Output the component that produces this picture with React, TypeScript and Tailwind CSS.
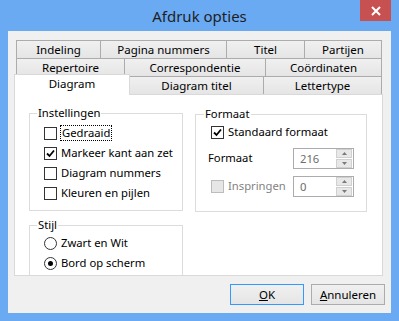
import React from "react";

const font = { fontFamily: '"Noto Sans", "Liberation Sans", sans-serif' };

function Tab({ label, w, first, h = "h-[19px]" }: { label: string; w: string; first?: boolean; h?: string }) {
  return (
    <div
      className={`${w} ${h} ${first ? "" : "-ml-px"} flex items-center justify-center border border-[#acacac] bg-gradient-to-b from-[#f0f0f0] to-[#e5e5e5] text-[11.5px] text-black leading-none`}
    >
      {label}
    </div>
  );
}

function Check({ checked, disabled }: { checked?: boolean; disabled?: boolean }) {
  return (
    <div
      className={`w-[13px] h-[13px] flex items-center justify-center border ${
        disabled ? "border-[#bcbcbc] bg-[#e6e6e6]" : "border-[#333333] bg-white"
      }`}
    >
      {checked && (
        <svg width="9" height="9" viewBox="0 0 9 9">
          <path d="M1 4.5 L3.5 7 L8 1.5" fill="none" stroke="#000" strokeWidth="1.8" />
        </svg>
      )}
    </div>
  );
}

function Radio({ checked }: { checked?: boolean }) {
  return (
    <div className="w-[13px] h-[13px] rounded-full border border-[#333333] bg-white flex items-center justify-center">
      {checked && <div className="w-[5px] h-[5px] rounded-full bg-black" />}
    </div>
  );
}

function Spin({ value }: { value: string }) {
  return (
    <div className="w-[61px] h-[21px] border border-[#acacac] bg-white flex items-center">
      <span className="flex-1 pl-[6px] text-[#6d6d6d] leading-none">{value}</span>
      <div className="flex flex-col w-[16px] h-[19px] mr-px gap-px">
        <div className="flex-1 border border-[#d0d0d0] bg-[#e8e8e8] flex items-center justify-center">
          <svg width="5" height="3" viewBox="0 0 5 3">
            <path d="M0 3 L2.5 0 L5 3 Z" fill="#7a7a7a" />
          </svg>
        </div>
        <div className="flex-1 border border-[#d0d0d0] bg-[#e8e8e8] flex items-center justify-center">
          <svg width="5" height="3" viewBox="0 0 5 3">
            <path d="M0 0 L2.5 3 L5 0 Z" fill="#7a7a7a" />
          </svg>
        </div>
      </div>
    </div>
  );
}

export default function App() {
  return (
    <div className="w-[399px] h-[321px] bg-[#6aaaf3] flex flex-col overflow-hidden" style={font}>
      {/* Title bar */}
      <div className="relative h-[31px] flex items-center justify-center">
        <span className="text-[15px] text-[#1e1e1e] leading-none mt-[1px]">Afdruk opties</span>
        <div className="absolute right-[8px] top-0 w-[31px] h-[21px] bg-[#c75050] flex items-center justify-center">
          <svg width="10" height="10" viewBox="0 0 10 10">
            <path d="M1 1 L9 9 M9 1 L1 9" stroke="#fff" strokeWidth="2" />
          </svg>
        </div>
      </div>

      {/* Client area */}
      <div className="mx-[8px] h-[282px] bg-[#f0f0f0] pt-[9px] pl-[6px] flex flex-col">
        {/* Tabs */}
        <div className="flex ml-[2px]">
          <Tab label="Indeling" w="w-[85px]" first />
          <Tab label="Pagina nummers" w="w-[127px]" />
          <Tab label="Titel" w="w-[79px]" />
          <Tab label="Partijen" w="w-[78px]" />
        </div>
        <div className="flex ml-[2px] -mt-px">
          <Tab label="Repertoire" w="w-[109px]" first />
          <Tab label="Correspondentie" w="w-[142px]" />
          <Tab label="Coördinaten" w="w-[117px]" />
        </div>
        <div className="flex items-end h-[20px] -mt-[3px]">
          <div className="relative z-10 w-[116px] h-[21px] -mb-px border border-b-0 border-[#d9d9d9] bg-white flex justify-center pt-[2px] text-[11.5px] leading-[14px]">
            Diagram
          </div>
          <Tab label="Diagram titel" w="w-[135px]" h="h-[18px] border-b-0" />
          <Tab label="Lettertype" w="w-[119px]" h="h-[18px] border-b-0" />
        </div>

        {/* Panel */}
        <div className="w-[369px] h-[182px] border border-[#d9d9d9] bg-white overflow-hidden flex gap-[12px] pl-[14px] pt-[10px] text-[11.25px] text-black">
          <div className="flex flex-col gap-[6px] w-[154px] shrink-0">
            <fieldset className="border border-[#dcdcdc] h-[106px] shrink-0">
              <legend className="ml-[7px] px-[1px] leading-[16px]">Instellingen</legend>
              <div className="pt-[2px] pl-[14px] flex flex-col">
                <div className="h-[20px] flex items-center gap-[3px]">
                  <Check />
                  <span className="border border-dotted border-black px-[1px] leading-[14px]">Gedraaid</span>
                </div>
                <div className="h-[20px] flex items-center gap-[4px]">
                  <Check checked />
                  <span>Markeer kant aan zet</span>
                </div>
                <div className="h-[20px] flex items-center gap-[4px]">
                  <Check />
                  <span>Diagram nummers</span>
                </div>
                <div className="h-[20px] flex items-center gap-[4px]">
                  <Check />
                  <span>Kleuren en pijlen</span>
                </div>
              </div>
            </fieldset>
            <fieldset className="border border-[#dcdcdc] h-[70px] shrink-0">
              <legend className="ml-[7px] px-[1px] leading-[16px]">Stijl</legend>
              <div className="pl-[14px] flex flex-col">
                <div className="h-[20px] flex items-center gap-[4px]">
                  <Radio />
                  <span>Zwart en Wit</span>
                </div>
                <div className="h-[20px] flex items-center gap-[4px]">
                  <Radio checked />
                  <span>Bord op scherm</span>
                </div>
              </div>
            </fieldset>
          </div>

          <fieldset className="border border-[#dcdcdc] w-[172px] h-[106px] mt-px shrink-0">
            <legend className="ml-[8px] px-[1px] leading-[16px]">Formaat</legend>
            <div className="pl-[15px] pr-[12px] flex flex-col">
              <div className="h-[20px] flex items-center gap-[4px]">
                <Check checked />
                <span>Standaard formaat</span>
              </div>
              <div className="mt-[6px] h-[21px] flex items-center justify-between">
                <span className="-ml-[3px]">Formaat</span>
                <Spin value="216" />
              </div>
              <div className="mt-[7px] h-[21px] flex items-center justify-between">
                <div className="flex items-center gap-[4px]">
                  <Check disabled />
                  <span className="text-[#838383]">Inspringen</span>
                </div>
                <Spin value="0" />
              </div>
            </div>
          </fieldset>
        </div>

        {/* Buttons */}
        <div className="flex justify-end gap-[7px] pr-[6px] mt-[8px] text-[11.5px]">
          <div className="w-[74px] h-[21px] border border-[#3399ff] bg-gradient-to-b from-[#f0f0f0] to-[#e5e5e5] flex items-center justify-center leading-none">
            <span><span className="underline">O</span>K</span>
          </div>
          <div className="w-[74px] h-[21px] border border-[#acacac] bg-gradient-to-b from-[#f0f0f0] to-[#e5e5e5] flex items-center justify-center leading-none">
            <span><span className="underline">A</span>nnuleren</span>
          </div>
        </div>
      </div>
    </div>
  );
}
